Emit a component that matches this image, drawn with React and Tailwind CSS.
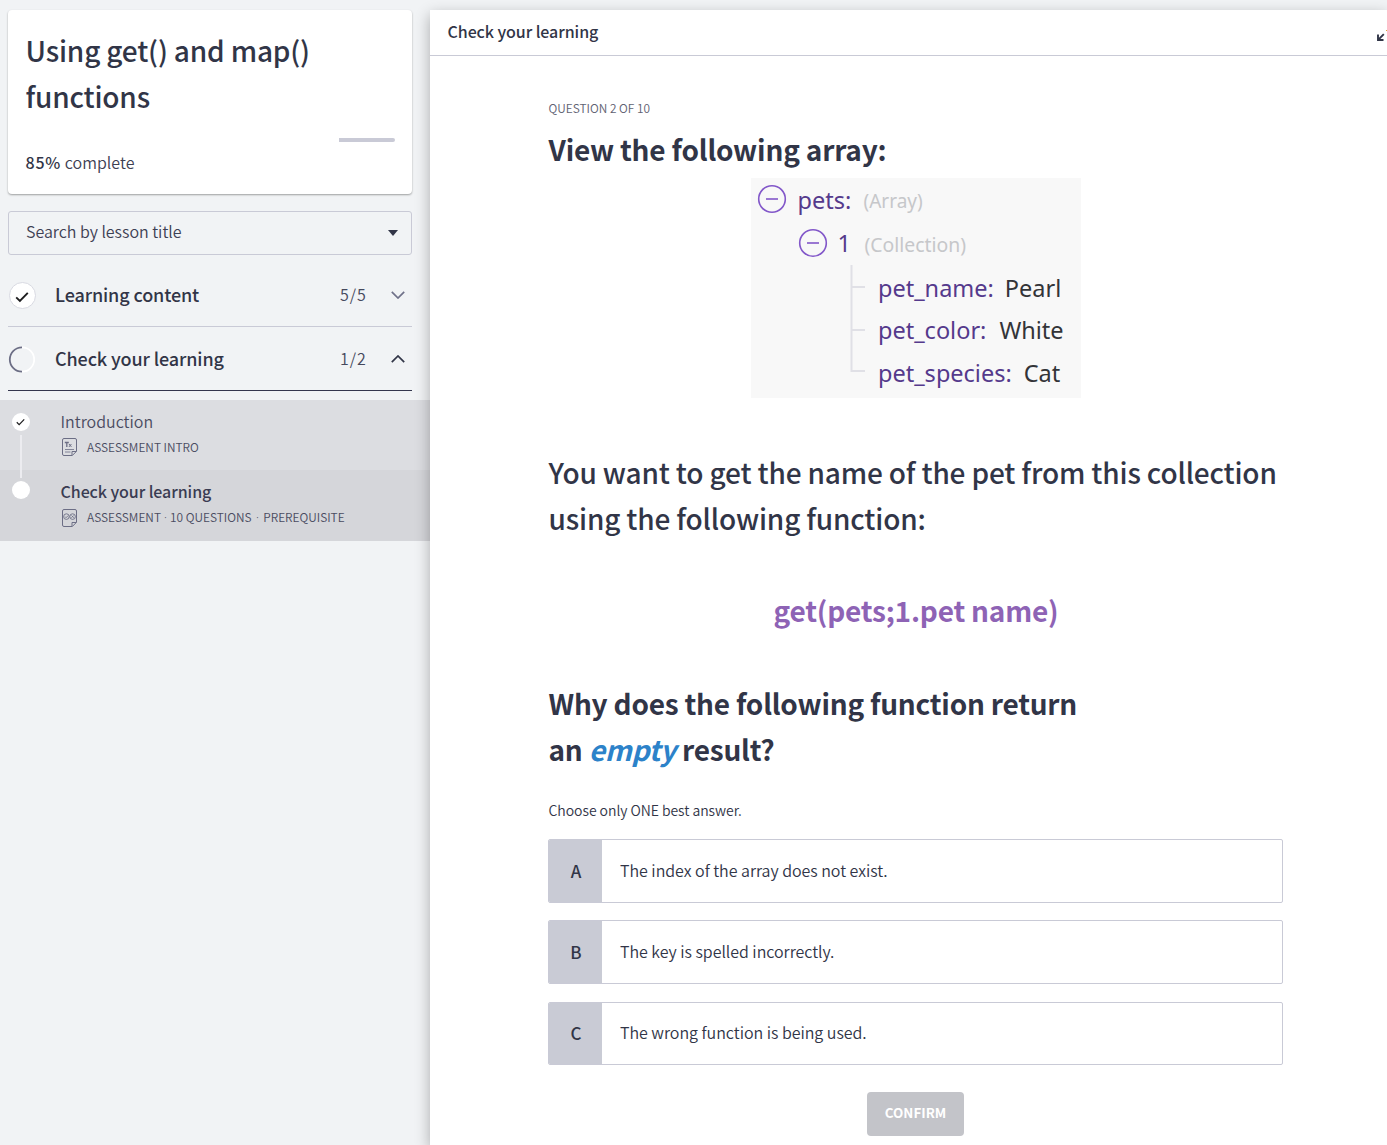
import React from "react";

const baseFont = "font-['Noto_Sans_CJK_SC',sans-serif]";

function Check({ className }) {
  return (
    <svg viewBox="0 0 14 12" className={className} fill="none" stroke="#1d1d1f" strokeWidth="1.9">
      <path d="M1.2 6.4 4.9 10 12.8 1.8" />
    </svg>
  );
}

function Chevron({ up }) {
  return (
    <svg viewBox="0 0 14 8" className="h-2 w-3.5" fill="none" stroke={up ? "#313547" : "#6f7189"} strokeWidth="1.7">
      <path d={up ? "M.8 7.2 7 1l6.2 6.2" : "M.8.8 7 7 13.2.8"} />
    </svg>
  );
}

function DocIcon({ quiz }) {
  return (
    <svg viewBox="0 0 15 18" className={`h-[18px] w-[15px] shrink-0 ${quiz ? "relative top-px" : ""}`} fill="none" stroke="#6c6e85" strokeWidth="1">
      <path d="M10 17.5H2A1.5 1.5 0 0 1 .5 16V2A1.5 1.5 0 0 1 2 .5h11A1.5 1.5 0 0 1 14.5 2v11.3L10.3 17.5ZM10 17.3v-3.8h4.2" />
      {quiz ? (
        <g strokeWidth=".9">
          <circle cx="4.4" cy="7.6" r="2.8" />
          <circle cx="10.6" cy="7.6" r="2.8" />
          <path d="m3 7.6 1.1 1.1 1.9-2M9.5 6.5l2.2 2.2M11.7 6.5 9.5 8.7" />
        </g>
      ) : (
        <g>
          <path d="M2.8 4.5h4M4.8 4.5v4.4" strokeWidth="1.3" />
          <path d="m7 6 2.4 2.9M9.4 6 7 8.9" />
          <path d="M3 11.5h9M3 14h5.5" strokeWidth=".8" />
        </g>
      )}
    </svg>
  );
}

function Section({ icon, title, count, up }) {
  return (
    <div className={`mx-2 flex h-16 items-center border-b ${up ? "border-[#34364e]" : "border-[#c9cad6]"}`}>
      <span className="w-[47px] pt-0.5">{icon}</span>
      <span className="relative -top-px flex-1 text-[18px] leading-6 font-medium tracking-[-0.12px]">{title}</span>
      <span className="relative -top-px w-[51px] text-[16px] leading-6 font-[350] tracking-[1px] text-[#45485c]">{count}</span>
      <span className="mr-[7px]">
        <Chevron up={up} />
      </span>
    </div>
  );
}

function Dot({ className }) {
  return <span className={`font-['Noto_Sans',sans-serif] whitespace-pre ${className}`}> · </span>;
}

function Minus() {
  return (
    <svg viewBox="0 0 30 30" className="size-[30px] shrink-0" fill="none" stroke="#8257c9" strokeWidth="1.6">
      <circle cx="15" cy="15" r="13.3" />
      <path d="M9 15h12" />
    </svg>
  );
}

const fields = [
  ["pet_name:", "Pearl", "gap-[11px]"],
  ["pet_color:", "White", "gap-[13px]"],
  ["pet_species:", "Cat", "gap-3"],
];

const answers = [
  ["A", "The index of the array does not exist.", "mt-[19px] h-16"],
  ["B", "The key is spelled incorrectly.", "mt-[17px] h-16"],
  ["C", "The wrong function is being used.", "mt-[18px] h-[63px]"],
];

function Sidebar() {
  return (
    <aside className="w-[430px] shrink-0 pt-2.5">
      <div className="mx-2 h-[184px] w-[404px] rounded bg-white px-[18px] pt-[17px] shadow-[0_1px_2px_rgba(0,0,0,0.35)]">
        <h1 className="-ml-[0.5px] text-[28px] leading-[46px] font-medium tracking-[-0.17px]">
          Using get() and map()
          <br />
          functions
        </h1>
        <div className="mt-[19px] flex h-1 w-[369px] justify-end">
          <div className="h-1 w-14 rounded-r-sm bg-[#c9cad6]" />
        </div>
        <p className="mt-2 -ml-[0.5px] text-[16px] leading-6 font-[350] tracking-[0.04px] text-[#3d4053]">
          <b className="font-medium tracking-[0.8px] text-[#313547]">85%</b> complete
        </p>
      </div>

      <div className="mx-2 mt-[17px] flex h-11 w-[404px] items-center rounded-[3px] border border-[#c9cad6] pr-[13px] pl-[17px]">
        <span className="relative -top-[2px] flex-1 text-[16px] leading-6 font-[350] tracking-[-0.02px] text-[#3d4053]">Search by lesson title</span>
        <svg viewBox="0 0 10 6" className="h-1.5 w-2.5" fill="#313547">
          <path d="M0 0h10L5 6Z" />
        </svg>
      </div>

      <div className="mt-2 w-[420px]">
        <Section
          title="Learning content"
          count="5/5"
          icon={
            <span className="ml-[0.5px] flex size-[27px] items-center justify-center rounded-full border border-[#d9dae2] bg-white">
              <Check className="mt-0.5 mr-px h-3 w-3.5" />
            </span>
          }
        />
        <Section
          up
          title="Check your learning"
          count="1/2"
          icon={
            <svg viewBox="0 0 27 27" className="size-[27px]" fill="none" strokeWidth="1.8">
              <circle cx="14" cy="13.5" r="12.2" stroke="#ffffff" />
              <path d="M14 25.7a12.2 12.2 0 0 1 0-24.4" stroke="#6c6e85" />
            </svg>
          }
        />
      </div>

      <div className="mt-[9px] flex h-[70px] bg-[#dcdde1]">
        <div className="flex w-[60.5px] flex-col pt-[13px] pl-[11.5px]">
          <span className="flex size-[18px] items-center justify-center rounded-full bg-white">
            <Check className="h-2 w-[9px]" />
          </span>
          <span className="mt-1 ml-2 w-0.5 flex-1 bg-[#ececf0]" />
        </div>
        <div className="pt-[9px]">
          <div className="text-[16px] leading-6 font-[350] text-[#4a4c61]">Introduction</div>
          <div className="mt-[5px] ml-[1.5px] flex items-center gap-2.5 text-[11.9px] leading-[18px] font-[350] text-[#4a4c61]">
            <DocIcon />
            ASSESSMENT INTRO
          </div>
        </div>
      </div>
      <div className="flex h-[71px] bg-[#d5d6da]">
        <div className="flex w-[60.5px] flex-col pl-[11.5px]">
          <span className="ml-2 h-2 w-0.5 bg-[#ececf0]" />
          <span className="mt-[3px] size-[18px] rounded-full bg-white" />
        </div>
        <div className="pt-[9px]">
          <div className="text-[16px] leading-6 font-medium tracking-[-0.07px] text-[#3a3c52]">Check your learning</div>
          <div className="mt-[5px] ml-[1.5px] flex items-center gap-2.5 text-[11.9px] leading-[18px] font-[350] text-[#4a4c61]">
            <DocIcon quiz />
            <span>
              ASSESSMENT
              <Dot className="" />
              10 QUESTIONS
              <Dot className="px-[1.3px]" />
              PREREQUISITE
            </span>
          </div>
        </div>
      </div>
    </aside>
  );
}

function ArrayTree() {
  return (
    <div className="mx-auto mt-1.5 h-[220px] w-[330px] bg-[#f8f8f8] font-['Noto_Sans',sans-serif] text-[23.5px] text-[#553a8c]">
      <div className="flex h-[42px] items-center pl-1.5">
        <Minus />
        <span className="relative top-[2px] ml-[11px] w-[66px]">pets:</span>
        <span className="relative top-[2px] text-[19px] text-[#c6c7ca]">(Array)</span>
      </div>
      <div className="flex h-[45px] items-center pl-[47px]">
        <Minus />
        <span className="relative top-px ml-2.5 w-[27px]">1</span>
        <span className="relative top-[2px] text-[19.4px] text-[#c6c7ca]">(Collection)</span>
      </div>
      <div className="flex">
        <svg viewBox="0 0 15 110" className="ml-[99px] h-[110px] w-[15px]" fill="none" stroke="#e0e0e6" strokeWidth="2">
          <path d="M1.5 0v106H15M1.5 22H15M1.5 65H15" />
        </svg>
        <div className="ml-[13.5px] pt-0.5">
          {fields.map(([k, v, gap]) => (
            <div key={k} className={`flex h-[42.7px] items-center ${gap}`}>
              <span>{k}</span>
              <span className="text-[#333438]">{v}</span>
            </div>
          ))}
        </div>
      </div>
    </div>
  );
}

export default function App() {
  return (
    <div className={`flex h-[1145px] w-full overflow-hidden bg-[#f1f3f5] text-[#313547] ${baseFont}`}>
      <Sidebar />
      <main className="relative mt-2.5 min-w-0 flex-1 bg-white shadow-[0_5px_14px_rgba(0,0,0,0.3)]">
        <header className="flex h-[46px] items-center justify-between border-b border-[#c9cad6] pl-[17.5px]">
          <span className="relative -top-[2px] text-[16px] leading-6 font-medium tracking-[-0.07px]">Check your learning</span>
          <svg viewBox="0 0 12 14" className="mt-1.5 h-3.5 w-3" fill="none" stroke="#313547" strokeWidth="1.9">
            <path d="M3 5.5V11h5.5M3.4 10.6 8.8 5.2" />
            <path d="M11 1.5h1" stroke="#e0a33a" strokeWidth="1" />
          </svg>
        </header>

        <div className="ml-[118px] w-[735px] pt-[42px]">
          <p className="ml-[0.5px] text-[11.9px] leading-5 font-[350] text-[#5f6272]">QUESTION 2 OF 10</p>
          <h2 className="mt-2 ml-[0.5px] text-[28px] leading-[46px] font-bold tracking-[-0.2px]">View the following array:</h2>
          <ArrayTree />
          <p className="mt-[51px] ml-[0.5px] text-[28px] leading-[46px] font-medium tracking-[-0.16px] whitespace-nowrap">
            You want to get the name of the pet from this collection
            <br />
            using the following function:
          </p>
          <p className="mt-[46px] ml-px text-center text-[28px] leading-[46px] font-bold tracking-[-0.2px] text-[#8e63b5]">get(pets;1.pet name)</p>
          <h2 className="mt-[47px] ml-[0.5px] text-[28px] leading-[46px] font-bold tracking-[-0.22px]">
            Why does the following function return
            <br />
            an <em className="text-[#2c82c9]">empty</em> result?
          </h2>
          <p className="mt-7 ml-[0.5px] text-[14px] leading-5 font-[350] tracking-[-0.05px]">Choose only ONE best answer.</p>

          {answers.map(([letter, text, box]) => (
            <div key={letter} className={`flex items-center overflow-hidden rounded-[2px] border border-[#c9cad6] ${box}`}>
              <div className="flex w-[53px] items-center justify-center self-stretch bg-[#c9cbd5] text-[17px] leading-[25px] font-medium">
                <span className="relative -top-[0.6px] ml-px">{letter}</span>
              </div>
              <p className="relative -top-[1.2px] pl-[18px] text-[16px] leading-6 font-[350] tracking-[-0.03px]">{text}</p>
            </div>
          ))}

          <button className="mx-auto mt-[27px] flex h-11 w-[97px] items-center justify-center rounded bg-[#c3c4c9] text-[13.4px] leading-5 font-bold text-white">
            <span className="relative -top-[2px]">CONFIRM</span>
          </button>
        </div>
      </main>
    </div>
  );
}
